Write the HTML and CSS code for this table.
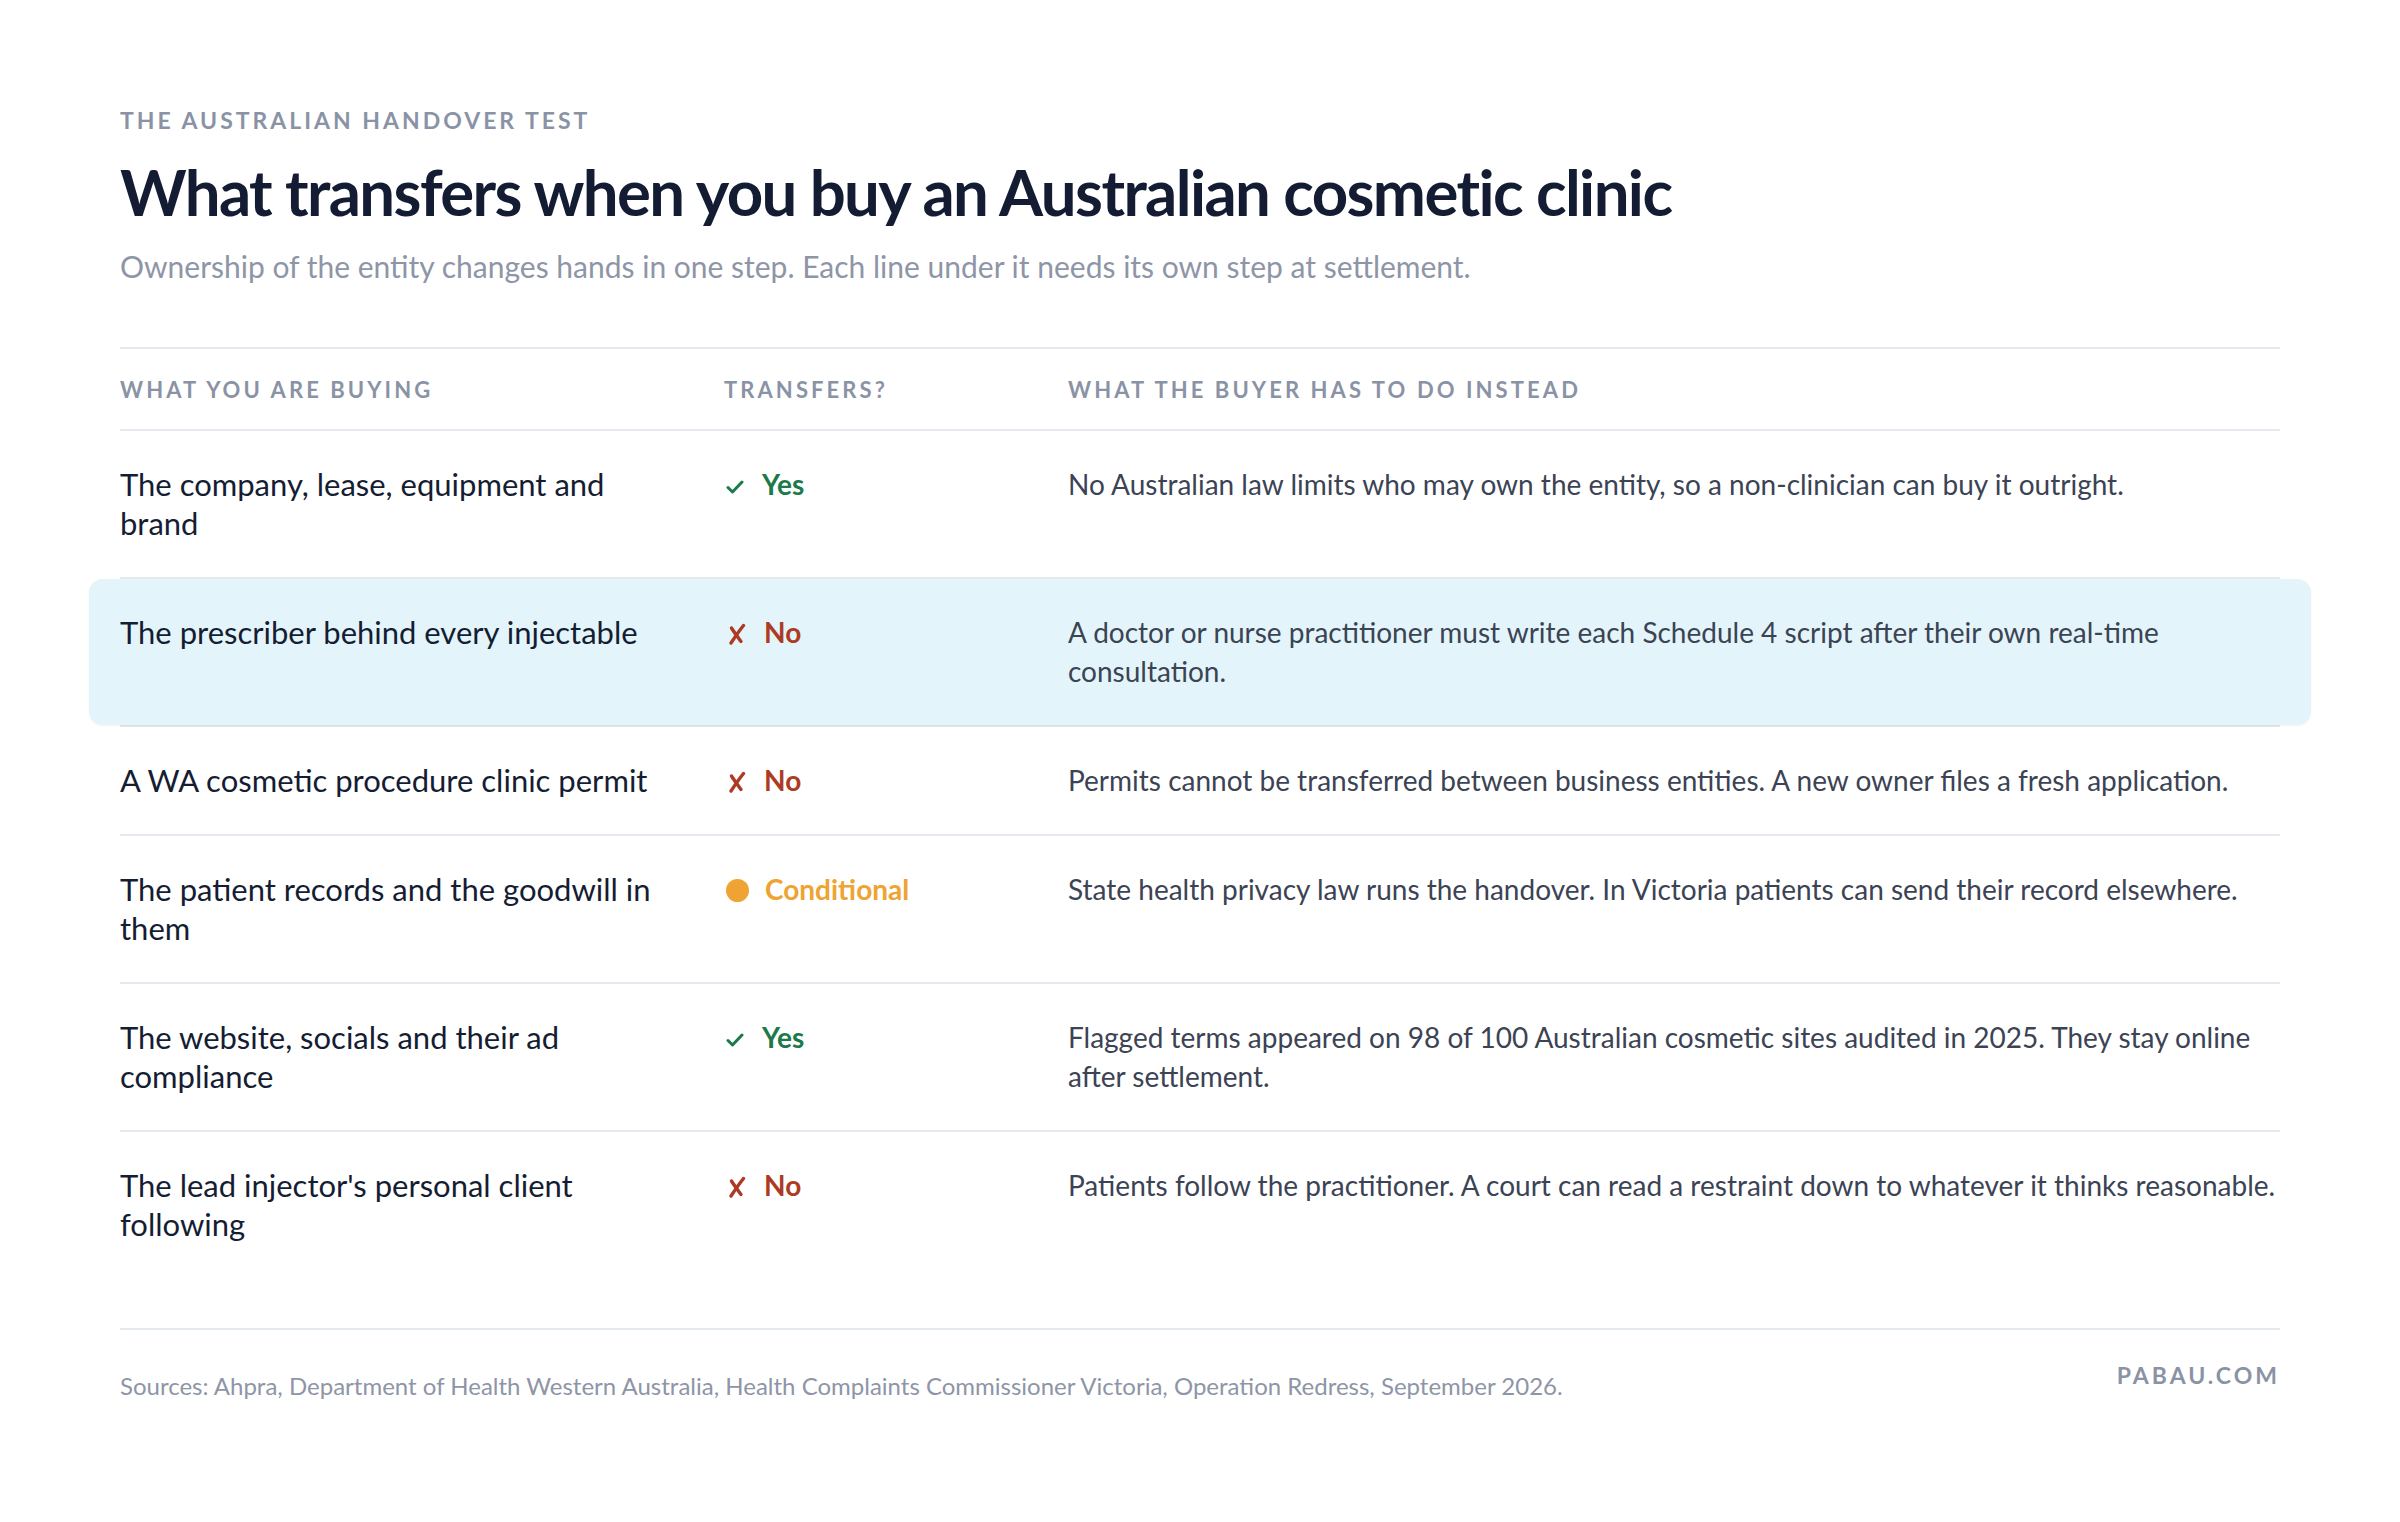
FILE: index.html
```html
<!DOCTYPE html>
<html lang="en">
<head>
<meta charset="utf-8">
<title>What transfers when you buy an Australian cosmetic clinic</title>
<link rel="stylesheet" href="styles.css">
</head>
<body>
<main class="page">
  <p class="eyebrow">The Australian handover test</p>
  <h1 class="title">What transfers when you buy an Australian cosmetic clinic</h1>
  <p class="subtitle">Ownership of the entity changes hands in one step. Each line under it needs its own step at settlement.</p>

  <section class="table">
    <div class="row head">
      <div class="cell">What you are buying</div>
      <div class="cell">Transfers?</div>
      <div class="cell">What the buyer has to do instead</div>
    </div>

    <div class="row">
      <div class="cell item">The company, lease, equipment and brand</div>
      <div class="cell status yes"><svg class="ico check" viewBox="0 0 18 14" aria-hidden="true"><path d="M2 7.5 L6.5 12 L16 2"/></svg>Yes</div>
      <div class="cell desc">No Australian law limits who may own the entity, so a non-clinician can buy it outright.</div>
    </div>

    <div class="row highlight">
      <div class="cell item">The prescriber behind every injectable</div>
      <div class="cell status no"><svg class="ico cross" viewBox="0 0 18 22" aria-hidden="true"><path d="M15.5 2.5 C11 8 7 14 3 20"/><path d="M3.5 5 C6 9 9 13 13 18.5"/></svg>No</div>
      <div class="cell desc">A doctor or nurse practitioner must write each Schedule 4 script after their own real-time consultation.</div>
    </div>

    <div class="row">
      <div class="cell item">A WA cosmetic procedure clinic permit</div>
      <div class="cell status no"><svg class="ico cross" viewBox="0 0 18 22" aria-hidden="true"><path d="M15.5 2.5 C11 8 7 14 3 20"/><path d="M3.5 5 C6 9 9 13 13 18.5"/></svg>No</div>
      <div class="cell desc">Permits cannot be transferred between business entities. A new owner files a fresh application.</div>
    </div>

    <div class="row">
      <div class="cell item">The patient records and the goodwill in them</div>
      <div class="cell status cond"><span class="dot"></span>Conditional</div>
      <div class="cell desc">State health privacy law runs the handover. In Victoria patients can send their record elsewhere.</div>
    </div>

    <div class="row">
      <div class="cell item">The website, socials and their ad compliance</div>
      <div class="cell status yes"><svg class="ico check" viewBox="0 0 18 14" aria-hidden="true"><path d="M2 7.5 L6.5 12 L16 2"/></svg>Yes</div>
      <div class="cell desc">Flagged terms appeared on 98 of 100 Australian cosmetic sites audited in 2025. They stay online after settlement.</div>
    </div>

    <div class="row last">
      <div class="cell item">The lead injector's personal client following</div>
      <div class="cell status no"><svg class="ico cross" viewBox="0 0 18 22" aria-hidden="true"><path d="M15.5 2.5 C11 8 7 14 3 20"/><path d="M3.5 5 C6 9 9 13 13 18.5"/></svg>No</div>
      <div class="cell desc">Patients follow the practitioner. A court can read a restraint down to whatever it thinks reasonable.</div>
    </div>
  </section>

  <footer class="footer">
    <p class="sources">Sources: Ahpra, Department of Health Western Australia, Health Complaints Commissioner Victoria, Operation Redress, September 2026.</p>
    <p class="brand">PABAU.COM</p>
  </footer>
</main>
</body>
</html>
```

FILE: styles.css
```css
* { box-sizing: border-box; }

body {
  margin: 0;
  background: #ffffff;
  font-family: "Lato", "Inter", "Liberation Sans", sans-serif;
  color: #151d33;
}

.page {
  width: 2400px;
  padding: 106px 120px 100px;
}

.eyebrow {
  margin: 0;
  font-size: 23px;
  line-height: 28px;
  font-weight: 700;
  letter-spacing: 0.13em;
  text-transform: uppercase;
  color: #8a93a5;
}

.title {
  margin: 18px 0 0;
  font-size: 63.5px;
  line-height: 80px;
  font-weight: 700;
  letter-spacing: -0.025em;
  color: #131c33;
}

.subtitle {
  margin: 14px 0 0;
  font-size: 30px;
  line-height: 40px;
  font-weight: 400;
  color: #8e95a7;
}

.table {
  margin-top: 61px;
  border-top: 2px solid #e4e9ef;
}

.row {
  position: relative;
  display: grid;
  grid-template-columns: 604px 344px 1fr;
  padding: 34px 0;
  border-bottom: 2px solid #e4e9ef;
  font-size: 28px;
  line-height: 39px;
}

.row.head {
  padding: 22px 0 20px;
  font-size: 22px;
  line-height: 38px;
  font-weight: 700;
  letter-spacing: 0.14em;
  text-transform: uppercase;
  color: #8a93a5;
}

.row.last { border-bottom: none; }

.row.highlight::before {
  content: "";
  position: absolute;
  top: 0;
  bottom: 0;
  left: -31px;
  right: -31px;
  background: #e3f5fa;
  border-radius: 14px;
  box-shadow: 0 1px 2px rgba(20, 40, 70, 0.06);
  z-index: -1;
}

.highlight { z-index: 0; }

.cell.item {
  padding-right: 40px;
  font-size: 31px;
  color: #151d33;
}

.cell.desc {
  color: #3b4354;
}

.status {
  display: flex;
  align-items: center;
  height: 39px;
  font-weight: 700;
}

.status .ico {
  flex: none;
  fill: none;
  stroke: currentColor;
  stroke-linecap: round;
  stroke-linejoin: round;
}

.status .check {
  width: 18px;
  height: 14px;
  margin: 4px 18px 0 2px;
  stroke-width: 3;
}

.status .cross {
  width: 18px;
  height: 22px;
  margin: 2px 18px 0 4px;
  stroke-width: 3.4;
}

.status.yes { color: #1c7a4a; }
.status.no { color: #ad3a22; }
.status.cond { color: #eea332; }

.status .dot {
  display: inline-block;
  width: 23px;
  height: 23px;
  border-radius: 50%;
  background: #eea332;
  margin: 2px 16px 0 2px;
}

.footer {
  margin-top: 50px;
  border-top: 2px solid #e4e9ef;
  padding-top: 30px;
  display: flex;
  justify-content: space-between;
  align-items: flex-start;
}

.sources {
  margin: 11px 0 0;
  font-size: 24px;
  line-height: 30px;
  color: #8e95a7;
}

.brand {
  margin: 0;
  font-size: 23px;
  line-height: 30px;
  font-weight: 700;
  letter-spacing: 0.13em;
  color: #8a93a5;
}
```
